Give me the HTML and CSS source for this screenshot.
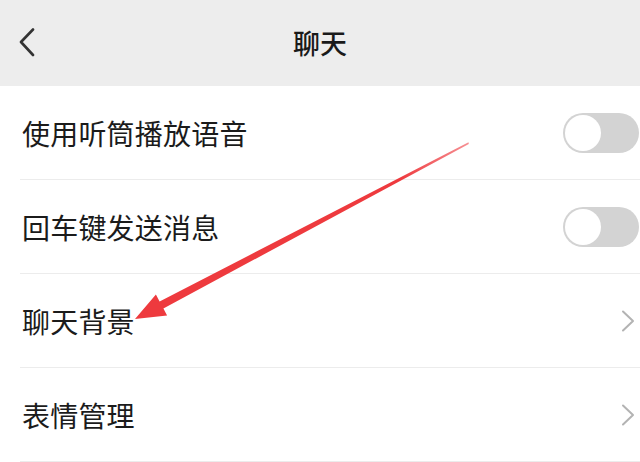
FILE: index.html
```html
<!DOCTYPE html>
<html lang="zh-CN">
<head>
<meta charset="utf-8">
<title>聊天</title>
<link rel="stylesheet" href="styles.css">
</head>
<body>
<div class="screen">
  <header class="nav">
    <span class="back">
      <svg width="16" height="30" viewBox="0 0 16 30"><path d="M14 1.5 L2 14 L14 27" fill="none" stroke="#333" stroke-width="2.6" stroke-linecap="round" stroke-linejoin="round"/></svg>
    </span>
    <h1 class="title">聊天</h1>
    <span></span>
  </header>
  <ul class="list">
    <li class="row"><span class="label">使用听筒播放语音</span><span class="switch"><span class="knob"></span></span></li>
    <li class="row"><span class="label">回车键发送消息</span><span class="switch"><span class="knob"></span></span></li>
    <li class="row"><span class="label">聊天背景</span><span class="chev"><svg width="14" height="22" viewBox="0 0 14 22"><path d="M2 1.5 L12 11 L2 20.5" fill="none" stroke="#b3b3b3" stroke-width="2" stroke-linecap="round" stroke-linejoin="round"/></svg></span></li>
    <li class="row"><span class="label">表情管理</span><span class="chev"><svg width="14" height="22" viewBox="0 0 14 22"><path d="M2 1.5 L12 11 L2 20.5" fill="none" stroke="#b3b3b3" stroke-width="2" stroke-linecap="round" stroke-linejoin="round"/></svg></span></li>
  </ul>
  <svg class="arrow" width="640" height="462" viewBox="0 0 640 462">
    <defs>
      <linearGradient id="fade" gradientUnits="userSpaceOnUse" x1="468" y1="143" x2="400" y2="179">
        <stop offset="0" stop-color="#f0444a" stop-opacity="0.6"/>
        <stop offset="1" stop-color="#ee3a3e" stop-opacity="1"/>
      </linearGradient>
    </defs>
    <polygon points="468.5,142.3 159.6,301.5 155.9,294.4 135,319 167.1,315.6 163.4,308.5 468.8,144" fill="url(#fade)"/>
  </svg>
</div>
</body>
</html>
```
FILE: styles.css
```css
* { box-sizing: border-box; }
html, body { margin: 0; padding: 0; background: #fff; }
body { font-family: "Noto Sans CJK SC", "Noto Sans", sans-serif; color: #1b1b1b; }
.screen { position: relative; width: 640px; height: 462px; overflow: hidden; background: #fff; }
.nav { height: 86px; background: #ededed; display: grid; grid-template-columns: 80px 1fr 80px; align-items: center; }
.back { display: flex; align-items: center; padding-left: 19px; }
.back svg { display: block; }
.title { margin: 0; text-align: center; font-size: 27px; font-weight: 500; color: #1a1a1a; line-height: 1; padding-bottom: 2px; }
.list { list-style: none; margin: 0; padding: 0; }
.row { box-sizing: content-box; height: 93px; margin-left: 20px; padding-left: 2px; border-bottom: 1px solid #ececec; display: flex; align-items: center; justify-content: space-between; }
.label { font-size: 28px; line-height: 1; letter-spacing: 0.2px; }
.switch { width: 76px; height: 40px; border-radius: 20px; background: #d3d3d3; margin-right: 1px; padding: 2px; display: flex; }
.knob { width: 36px; height: 36px; border-radius: 50%; background: #fff; }
.chev { margin-right: 5px; display: flex; }
.chev svg { display: block; }
.arrow { position: absolute; left: 0; top: 0; pointer-events: none; }
```
